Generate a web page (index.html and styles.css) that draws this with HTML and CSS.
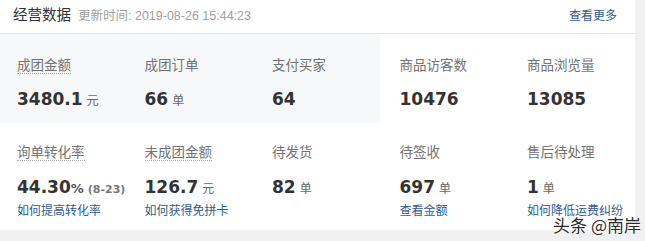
FILE: index.html
```html
<!DOCTYPE html>
<html lang="zh">
<head>
<meta charset="utf-8">
<link rel="stylesheet" href="styles.css">
</head>
<body>
<div class="page">
  <div class="card">
    <div class="header">
      <span class="title">经营数据</span>
      <span class="time">更新时间: 2019-08-26 15:44:23</span>
      <a class="more">查看更多</a>
    </div>
    <div class="row row1">
      <div class="cell">
        <div class="label"><span class="dotted">成团金额</span></div>
        <div class="value">3480.1<span class="unit">元</span></div>
      </div>
      <div class="cell">
        <div class="label">成团订单</div>
        <div class="value">66<span class="unit">单</span></div>
      </div>
      <div class="cell">
        <div class="label">支付买家</div>
        <div class="value">64</div>
      </div>
      <div class="cell">
        <div class="label">商品访客数</div>
        <div class="value">10476</div>
      </div>
      <div class="cell">
        <div class="label">商品浏览量</div>
        <div class="value">13085</div>
      </div>
    </div>
    <div class="row row2">
      <div class="cell">
        <div class="label"><span class="dotted">询单转化率</span></div>
        <div class="value">44.30<span class="pct">%</span><span class="date">(8-23)</span></div>
        <a class="link">如何提高转化率</a>
      </div>
      <div class="cell">
        <div class="label"><span class="dotted">未成团金额</span></div>
        <div class="value">126.7<span class="unit">元</span></div>
        <a class="link">如何获得免拼卡</a>
      </div>
      <div class="cell">
        <div class="label">待发货</div>
        <div class="value">82<span class="unit">单</span></div>
      </div>
      <div class="cell">
        <div class="label">待签收</div>
        <div class="value">697<span class="unit">单</span></div>
        <a class="link">查看金额</a>
      </div>
      <div class="cell">
        <div class="label">售后待处理</div>
        <div class="value">1<span class="unit">单</span></div>
        <a class="link">如何降低运费纠纷</a>
      </div>
    </div>
  </div>
  <div class="watermark">头条 @南岸</div>
</div>
</body>
</html>
```

FILE: styles.css
```css
* { box-sizing: border-box; }
html, body { margin: 0; padding: 0; }
body {
  background: #f0f0f0;
  font-family: "Noto Sans CJK SC", "Liberation Sans", sans-serif;
  width: 645px;
  height: 241px;
  overflow: hidden;
}
.page { position: relative; width: 645px; height: 241px; }
.card {
  width: 635px;
  height: 230px;
  background: #fff;
}
.header {
  height: 34px;
  border-bottom: 1px solid #e6e6e6;
  display: flex;
  align-items: baseline;
  padding: 4px 18px 0 13px;
}
.title {
  font-size: 14.5px;
  line-height: 20px;
  color: #333;
}
.time {
  margin-left: 7px;
  font-size: 12.5px;
  color: #a0a0a0;
  font-family: "Liberation Sans", "Noto Sans CJK SC", sans-serif;
}
.more {
  margin-left: auto;
  font-size: 12px;
  color: #2f5b8c;
}
.row {
  display: grid;
  grid-template-columns: repeat(5, 127.5px);
  padding-left: 17px;
}
.row1 {
  background: linear-gradient(to right, #f7f8fa 380px, #fff 380px);
  padding-top: 21px;
  padding-bottom: 12px;
}
.row2 {
  padding-top: 19px;
}
.label {
  height: 20px;
  line-height: 18px;
  font-size: 13.5px;
  color: #737373;
}
.dotted { display: inline-block; border-bottom: 1px dotted #aaa; line-height: 18px; }
.value {
  margin-top: 12px;
  height: 24px;
  line-height: 24px;
  font-family: "DejaVu Sans", sans-serif;
  font-weight: bold;
  font-size: 17px;
  color: #333;
  white-space: nowrap;
}
.row2 .value { margin-top: 13px; }
.unit {
  font-family: "Noto Sans CJK SC", sans-serif;
  font-weight: normal;
  font-size: 12px;
  color: #666;
  margin-left: 4px;
}
.pct { font-size: 13px; color: #555; }
.date {
  font-size: 11px;
  color: #777;
  margin-left: 4px;
}
.link {
  display: block;
  margin-top: 2px;
  font-size: 12px;
  line-height: 18px;
  color: #2f5b8c;
  white-space: nowrap;
}
.watermark {
  position: absolute;
  right: 4px;
  bottom: 6px;
  font-size: 17px;
  line-height: 20px;
  color: #2a2a2a;
  text-shadow: 0 0 2px #fff, 0 0 2px #fff, 0 0 2px #fff;
}
```
